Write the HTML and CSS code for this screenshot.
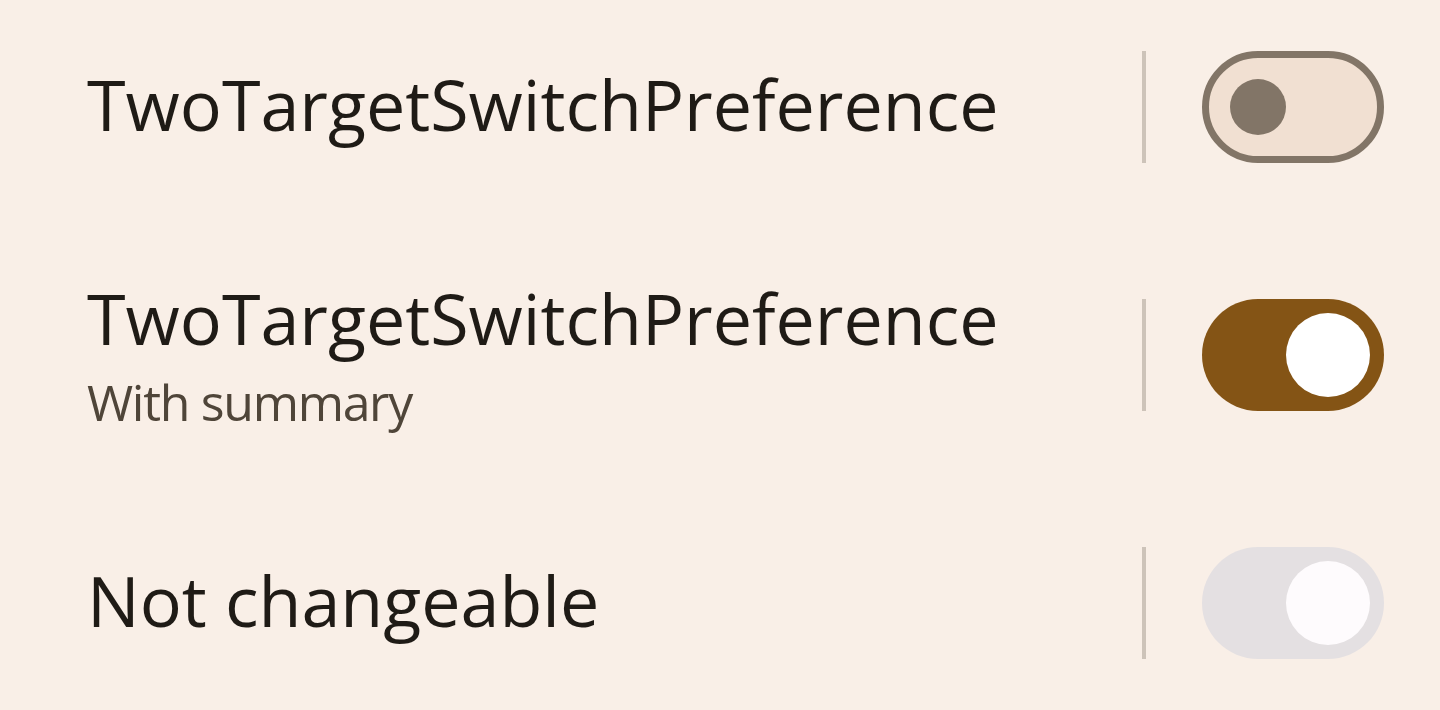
FILE: index.html
```html
<!DOCTYPE html>
<html>
<head>
<meta charset="utf-8">
<link rel="stylesheet" href="styles.css">
</head>
<body>
<div class="list">
  <div class="row">
    <div class="text">
      <div class="title">TwoTargetSwitchPreference</div>
    </div>
    <div class="divider"></div>
    <div class="switch off"><div class="thumb"></div></div>
  </div>
  <div class="row">
    <div class="text">
      <div class="title">TwoTargetSwitchPreference</div>
      <div class="summary">With summary</div>
    </div>
    <div class="divider"></div>
    <div class="switch on"><div class="thumb"></div></div>
  </div>
  <div class="row">
    <div class="text">
      <div class="title">Not changeable</div>
    </div>
    <div class="divider"></div>
    <div class="switch disabled"><div class="thumb"></div></div>
  </div>
</div>
</body>
</html>
```
FILE: styles.css
```css
html, body {
  margin: 0;
  padding: 0;
  background: #f9efe7;
  overflow: hidden;
}
body {
  width: 1440px;
  height: 710px;
  font-family: "Open Sans", "Noto Sans", sans-serif;
}
.list {
  display: flex;
  flex-direction: column;
  margin-top: -17px;
}
.row {
  display: flex;
  align-items: center;
  height: 248px;
  padding: 0 56px 0 87px;
}
.text {
  flex: 1;
  display: flex;
  flex-direction: column;
  padding-bottom: 6px;
}
.title {
  font-size: 70px;
  line-height: 92px;
  color: #1f1b16;
}
.summary {
  font-size: 50px;
  line-height: 68px;
  letter-spacing: -1.3px;
  color: #4f4539;
  margin-top: 4px;
  margin-bottom: -4px;
}
.divider {
  width: 4px;
  height: 112px;
  background: #cdc3b9;
  margin-right: 56px;
}
.switch {
  box-sizing: border-box;
  width: 182px;
  height: 112px;
  border-radius: 56px;
  display: flex;
  align-items: center;
}
.switch .thumb {
  border-radius: 50%;
}
.switch.off {
  background: #f1e0d2;
  border: 7px solid #827567;
  padding-left: 21px;
}
.switch.off .thumb {
  width: 56px;
  height: 56px;
  background: #827567;
}
.switch.on {
  background: #845415;
  justify-content: flex-end;
  padding-right: 14px;
}
.switch.on .thumb {
  width: 84px;
  height: 84px;
  background: #ffffff;
}
.switch.disabled {
  background: #e4e0e2;
  justify-content: flex-end;
  padding-right: 14px;
}
.switch.disabled .thumb {
  width: 84px;
  height: 84px;
  background: #fefbfd;
}
```
